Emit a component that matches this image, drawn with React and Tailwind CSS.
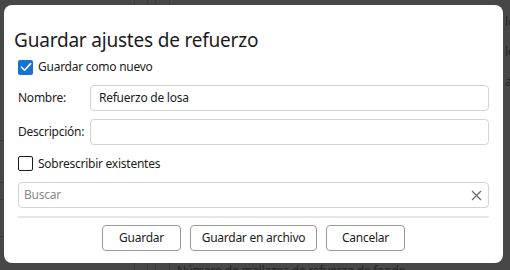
import React from "react";

const font = { fontFamily: '"Noto Sans", "Open Sans", sans-serif' };

function Check({ checked }) {
  return checked ? (
    <span className="flex h-[15px] w-[15px] shrink-0 items-center justify-center rounded-[2px] bg-[#1672d4]">
      <svg width="12" height="12" viewBox="0 0 12 12" fill="none">
        <path d="M1.5 6.2 L4.6 9.2 L10.6 2.6" stroke="white" strokeWidth="1.6" strokeLinecap="round" strokeLinejoin="round" />
      </svg>
    </span>
  ) : (
    <span className="h-[15px] w-[15px] shrink-0 rounded-[2px] border border-[#1c1c1c] bg-white" />
  );
}

function Btn({ children, w }) {
  return (
    <button className={`h-[26px] ${w} rounded-[4px] border border-[#9a9a9a] bg-white text-[12px] tracking-[-0.25px] text-[#1b1b1b]`}>
      {children}
    </button>
  );
}

export default function App() {
  return (
    <div className="relative h-[270px] w-[510px] overflow-hidden bg-[#474747]" style={font}>
      {/* background app */}
      <div className="flex h-full w-full">
        <div className="flex w-[135px] flex-col border-r border-[#3a3a3a]">
          <div className="h-[141px] border-b border-[#3a3a3a]" />
          <div className="h-[42px] border-b border-[#3a3a3a]" />
          <div className="h-[17px] border-b border-[#3a3a3a]" />
          <div className="h-[37px] border-b border-[#3a3a3a]" />
          <div className="flex-1" />
        </div>
        <div className="w-[13px] border-r border-[#3a3a3a]" />
        <div className="w-[8px] border-r border-[#3a3a3a]" />
        <div className="w-[14px] border-r border-[#3a3a3a]" />
        <div className="flex flex-1 flex-col">
          <div className="flex-1" />
          <div className="h-[7px] overflow-visible pl-[7px] text-[12px] leading-[16px] tracking-[-0.25px] text-[#262626]">
            Número de mallazos de refuerzo de fondo
          </div>
        </div>
        <div className="flex w-[7px] flex-col gap-[14px] overflow-hidden pl-[2px] pt-[14px] text-[12px] leading-[16px] text-[#262626]">
          <span>lo</span>
          <span>lo</span>
          <span>a</span>
        </div>
      </div>

      {/* dialog */}
      <div className="absolute left-[4px] top-[5px] flex h-[258px] w-[499px] flex-col rounded-[8px] bg-white pl-[10px] pr-[14px] text-[#1b1b1b]">
        <div className="pt-[23px] text-[19px] leading-[24px] tracking-[-0.2px] text-[#1b1b1b]">Guardar ajustes de refuerzo</div>
        <div className="flex flex-col pl-[4px] text-[12px] tracking-[-0.25px]">
          <label className="mt-[7px] flex h-[16px] items-center gap-[5px]">
            <Check checked />
            <span>Guardar como nuevo</span>
          </label>
          <div className="mt-[10px] flex h-[26px] items-center">
            <span className="w-[72px]">Nombre:</span>
            <div className="flex h-[26px] flex-1 items-center rounded-[4px] border border-[#d4d4d4] px-[8px]">
              Refuerzo de losa
            </div>
          </div>
          <div className="mt-[8px] flex h-[26px] items-center">
            <span className="w-[72px]">Descripción:</span>
            <div className="h-[26px] flex-1 rounded-[4px] border border-[#d4d4d4]" />
          </div>
          <label className="mt-[11px] flex h-[15px] items-center gap-[5px]">
            <Check checked={false} />
            <span>Sobrescribir existentes</span>
          </label>
          <div className="mt-[11px] flex h-[26px] items-center justify-between rounded-[4px] border border-[#d4d4d4] pl-[5px] pr-[6px]">
            <span className="text-[#8a8a8a]">Buscar</span>
            <svg width="11" height="11" viewBox="0 0 11 11">
              <path d="M1 1 L10 10 M10 1 L1 10" stroke="#6b6b6b" strokeWidth="1.3" />
            </svg>
          </div>
          <div className="mt-[8px] h-[2px] bg-[#e6e6e6]" />
          <div className="mt-[7px] flex justify-center gap-[9px]">
            <Btn w="w-[79px]">Guardar</Btn>
            <Btn w="w-[127px]">Guardar en archivo</Btn>
            <Btn w="w-[79px]">Cancelar</Btn>
          </div>
        </div>
      </div>
    </div>
  );
}
